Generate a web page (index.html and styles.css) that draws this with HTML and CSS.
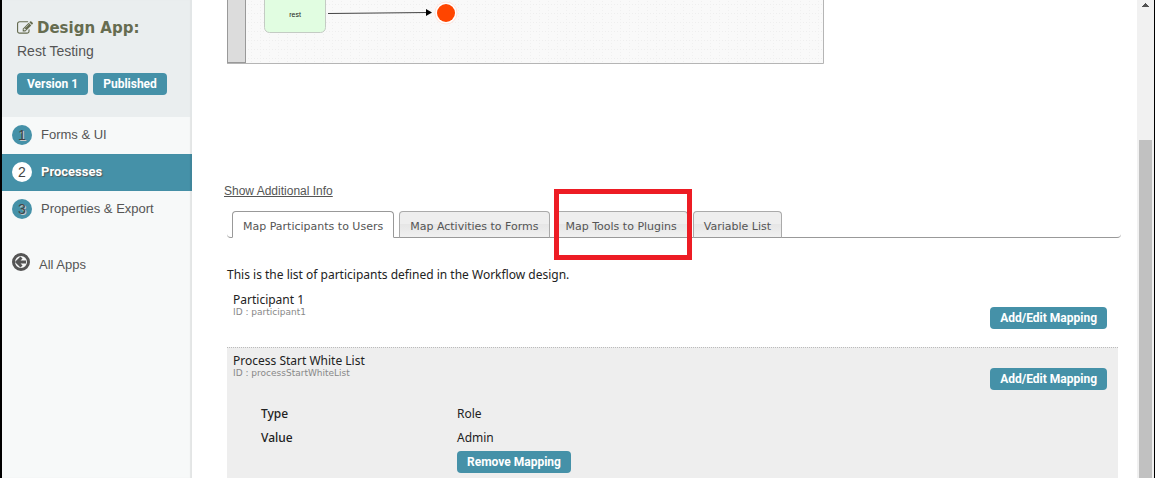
FILE: index.html
```html
<!DOCTYPE html>
<html lang="en">
<head>
<meta charset="utf-8">
<title>Design App: Rest Testing</title>
<link rel="stylesheet" href="styles.css">
</head>
<body>
<aside class="sidebar">
  <header class="app-head">
    <h1 class="app-title">
      <svg class="edit-icon" viewBox="0 0 1792 1792" aria-hidden="true"><path d="M888 1184l116-116-152-152-116 116v56h96v96h56zm440-720q-16-16-33 1l-350 350q-17 17-1 33t33-1l350-350q17-17 1-33zm80 594v190q0 119-84.500 203.500t-203.500 84.500h-832q-119 0-203.500-84.500t-84.500-203.500v-832q0-119 84.500-203.500t203.500-84.500h832q63 0 117 25 15 7 18 23 3 17-9 29l-49 49q-14 14-32 8-23-6-45-6h-832q-66 0-113 47t-47 113v832q0 66 47 113t113 47h832q66 0 113-47t47-113v-126q0-13 9-22l64-64q15-15 35-7t20 29zm-96-738l288 288-672 672h-288v-288zm444 132l-92 92-288-288 92-92q28-28 68-28t68 28l152 152q28 28 28 68t-28 68z"/></svg>
      <span>Design App:</span>
    </h1>
    <p class="app-name">Rest Testing</p>
    <div class="app-actions">
      <button class="btn" type="button">Version 1</button>
      <button class="btn" type="button">Published</button>
    </div>
  </header>
  <nav>
    <ul class="menu">
      <li><a class="menu-link" href="#forms"><span class="step">1</span><span>Forms &amp; UI</span></a></li>
      <li><a class="menu-link current" href="#processes"><span class="step">2</span><span>Processes</span></a></li>
      <li><a class="menu-link" href="#properties"><span class="step">3</span><span>Properties &amp; Export</span></a></li>
    </ul>
    <a class="all-apps" href="#apps">
      <svg class="back-icon" viewBox="0 0 18 18" aria-hidden="true"><circle cx="9" cy="9" r="7.500"/><path d="M9.500 4.500L5 9l4.500 4.500M5 9h9"/></svg>
      <span>All Apps</span>
    </a>
  </nav>
</aside>
<main class="main">
  <svg class="diagram" viewBox="0 0 597 64" role="img" aria-label="Process diagram">
    <defs>
      <pattern id="grid" x="6" y="4" width="9" height="9" patternUnits="userSpaceOnUse">
        <path d="M0 .5h9" stroke="#eee" stroke-dasharray="1 2"/>
        <path d="M.5 0v9" stroke="#f0f0f0" stroke-dasharray="1 2"/>
      </pattern>
    </defs>
    <rect width="597" height="64" fill="#f9f9f9"/>
    <rect x="19" width="577" height="63" fill="url(#grid)"/>
    <path d="M0 63.500h596.500V0" fill="none" stroke="#b5b5b5"/>
    <rect x=".5" y="-5" width="18" height="67.500" fill="#dcdcdc" stroke="#999"/>
    <rect x="37.500" y="-20" width="61" height="52.500" rx="5" fill="#e1fde1" stroke="#c4cbc4"/>
    <text class="node-label" x="68" y="17" text-anchor="middle">rest</text>
    <path d="M101 13.500L201 12.500" stroke="#444"/>
    <path d="M199 9l6 3.500-6 3.500z"/>
    <circle cx="219" cy="13" r="11" fill="#fff" stroke="#ffe4dc"/>
    <circle cx="219" cy="13" r="9" fill="#ff4500"/>
  </svg>
  <a class="info-link" href="#info">Show Additional Info</a>
  <ul class="tabs">
    <li><a class="tab active" href="#participants">Map Participants to Users</a></li>
    <li><a class="tab" href="#activities">Map Activities to Forms</a></li>
    <li class="marked"><a class="tab" href="#tools">Map Tools to Plugins</a><span class="marker"></span></li>
    <li><a class="tab" href="#variables">Variable List</a></li>
  </ul>
  <section class="panel">
    <p class="intro">This is the list of participants defined in the Workflow design.</p>
    <article class="entry">
      <div class="entry-text">
        <h2 class="entry-name">Participant 1</h2>
        <p class="entry-id">ID : participant1</p>
      </div>
      <button class="btn entry-btn" type="button">Add/Edit Mapping</button>
    </article>
    <article class="entry shaded">
      <div class="entry-text">
        <h2 class="entry-name">Process Start White List</h2>
        <p class="entry-id">ID : processStartWhiteList</p>
        <dl class="mapping">
          <dt>Type</dt><dd>Role</dd>
          <dt>Value</dt><dd>Admin</dd>
          <dd class="remove"><button class="btn" type="button">Remove Mapping</button></dd>
        </dl>
      </div>
      <button class="btn entry-btn" type="button">Add/Edit Mapping</button>
    </article>
  </section>
</main>
<div class="scrollbar" aria-hidden="true">
  <svg class="scroll-up" viewBox="0 0 7 4"><path d="M3 0h1v1h1v1h1v1h1v1H0V3h1V2h1V1h1z"/></svg>
  <div class="thumb"></div>
</div>
</body>
</html>
```
FILE: styles.css
```css
* { box-sizing: border-box; }
body {
  margin: 0;
  height: 100vh;
  overflow: hidden;
  display: flex;
  background: #fff;
  border-left: 2px solid #000;
  border-right: 1px solid #000;
  color: #222;
  font-family: "Liberation Sans", Arial, sans-serif;
}
h1, h2, p, ul, dl, dd { margin: 0; padding: 0; }
ul { list-style: none; }
a { color: inherit; text-decoration: none; }

.btn {
  height: 22px;
  padding: 0 10px;
  border: 0;
  border-radius: 4px;
  background: #4591a8;
  color: #fff;
  font: bold 12px/22px Roboto, Arial, sans-serif;
  white-space: nowrap;
}

.sidebar {
  flex: 0 0 190px;
  background: #f7f9f9;
  box-shadow: inset -2px 0 1px rgba(0, 0, 0, 0.08);
  color: #555;
  font-size: 13px;
}
.app-head {
  padding: 18px 15px 22px;
  background: rgba(225, 230, 231, 0.6);
}
.app-title {
  display: flex;
  align-items: center;
  gap: 4px;
  color: #666c50;
  font: bold 15px/20px "DejaVu Sans", Verdana, sans-serif;
  white-space: nowrap;
}
.edit-icon { width: 16px; height: 16px; fill: #666c50; }
.app-name { padding-top: 4px; font-size: 14px; line-height: 18px; }
.app-actions { display: flex; gap: 5px; padding-top: 13px; }

.menu-link {
  display: flex;
  align-items: center;
  gap: 9px;
  height: 37px;
  padding: 0 10px 2px;
}
.step {
  width: 20px;
  height: 20px;
  border-radius: 50%;
  background: #4591a8;
  color: #444;
  font-size: 14px;
  line-height: 20px;
  text-align: center;
  text-shadow: 1px 1px 0 #ccc;
}
.current {
  background: #4591a8;
  box-shadow: inset -2px 0 1px rgba(0, 0, 0, 0.08);
  color: #fff;
  font-family: Roboto, Arial, sans-serif;
  font-weight: bold;
  text-shadow: 1px 1px 1px #555;
}
.current .step {
  background: #fff;
  color: #444;
  font-family: "Liberation Sans", Arial, sans-serif;
  font-weight: normal;
  text-shadow: none;
}
.all-apps { display: flex; align-items: flex-start; gap: 9px; padding: 25px 10px; line-height: 24px; }
.back-icon { width: 18px; height: 18px; fill: none; stroke: #555; stroke-width: 3; }

.main {
  flex: 1;
  min-width: 0;
  overflow: hidden;
  padding: 0 16px 0 32px;
}
.diagram { display: block; width: 597px; height: 64px; margin-left: 3px; }
.node-label { fill: #222; font: 7px "Liberation Sans", Arial, sans-serif; }
.info-link {
  display: inline-block;
  margin-top: 119px;
  color: #555;
  font-size: 12px;
  line-height: 16px;
  text-decoration: underline;
}
.tabs {
  position: relative;
  display: flex;
  gap: 5px;
  margin-top: 12px;
  padding: 0 8px;
  font: 11px/25px "DejaVu Sans", Verdana, sans-serif;
  color: #555;
}
.tabs::before {
  content: "";
  position: absolute;
  inset: auto 0 0 3px;
  height: 4px;
  border-bottom: 1px solid #999;
  border-radius: 0 0 4px 4px;
}
.marked { position: relative; }
.tab {
  position: relative;
  display: block;
  height: 27px;
  padding: 2px 10px 0;
  border: 1px solid #aaa;
  border-bottom-color: #999;
  border-radius: 4px 4px 0 0;
  background: linear-gradient(#eee 50%, #e6e6e6 50%, #f0f0f0);
  white-space: nowrap;
}
.active { background: #fff; border-color: #999; border-bottom-color: #fff; }
.marker {
  position: absolute;
  inset: -22px -4px -22px -1px;
  border: 5px solid #ed1c24;
}
.panel {
  padding: 28px 3px 0;
  font-family: "Noto Sans", "Trebuchet MS", sans-serif;
  font-size: 12px;
}
.intro { line-height: 18px; }
.entry {
  display: flex;
  justify-content: space-between;
  align-items: flex-start;
  min-height: 60px;
  margin-top: 3px;
  padding: 6px 11px 4px 6px;
}
.entry-name { font-size: 12px; font-weight: normal; line-height: 14px; }
.entry-id { color: #888; font: 9px/11px "DejaVu Sans", Verdana, sans-serif; }
.entry-btn { margin-top: 14px; }
.shaded {
  margin-top: 0;
  border-top: 1px dotted #bbb;
  background: #eee;
}
.mapping {
  display: grid;
  grid-template-columns: 196px auto;
  grid-auto-rows: 24px;
  padding: 23px 0 0 28px;
  line-height: 24px;
}
.mapping dt { font-weight: 500; }
.remove { grid-column: 2; padding-top: 1px; line-height: 22px; }

.scrollbar {
  flex: 0 0 17px;
  display: flex;
  flex-direction: column;
  padding: 3px 2px 0;
  background: #f1f1f1;
}
.scroll-up { width: 7px; height: 4px; margin: 0 auto; fill: #505050; }
.thumb { flex: 1; margin-top: 133px; background: #c1c1c1; }
```
